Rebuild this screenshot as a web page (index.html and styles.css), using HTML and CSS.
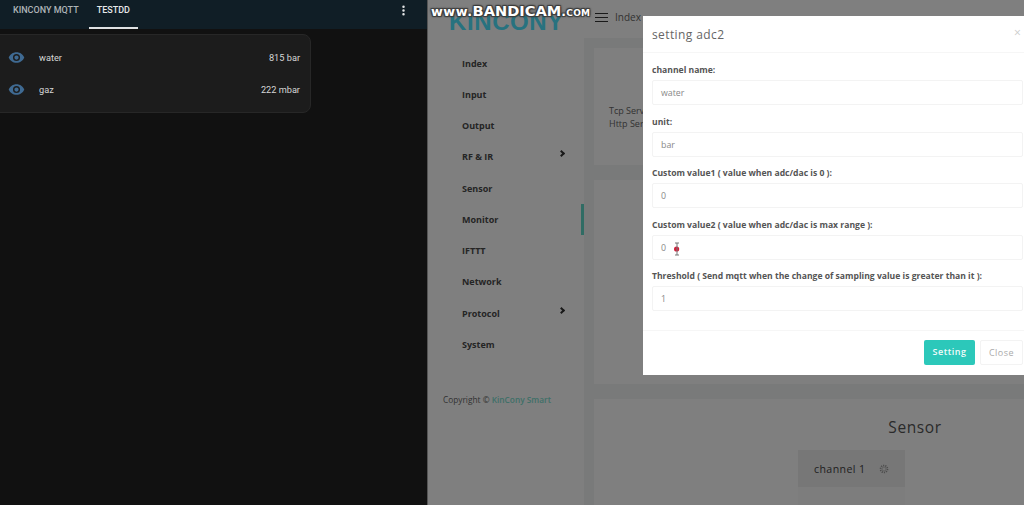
FILE: index.html
```html
<!DOCTYPE html>
<html lang="en">
<head>
  <meta charset="UTF-8" />
  <title>KinCony</title>
  <link rel="stylesheet" href="styles.css">
</head>
<body>

  <div class="ha-pane">
    <div class="ha-tabs">
      <div class="ha-tab">KINCONY MQTT</div>
      <div class="ha-tab active">TESTDD</div>
      <svg class="ha-menu" viewBox="0 0 24 24"><path d="M12,16A2,2 0 0,1 14,18A2,2 0 0,1 12,20A2,2 0 0,1 10,18A2,2 0 0,1 12,16M12,10A2,2 0 0,1 14,12A2,2 0 0,1 12,14A2,2 0 0,1 10,12A2,2 0 0,1 12,10M12,4A2,2 0 0,1 14,6A2,2 0 0,1 12,8A2,2 0 0,1 10,6A2,2 0 0,1 12,4Z"/></svg>
    </div>
    <div class="ha-card">
      <div class="ha-row">
        <svg class="ha-eye" viewBox="0 0 24 24"><path d="M12,9A3,3 0 0,0 9,12A3,3 0 0,0 12,15A3,3 0 0,0 15,12A3,3 0 0,0 12,9M12,17A5,5 0 0,1 7,12A5,5 0 0,1 12,7A5,5 0 0,1 17,12A5,5 0 0,1 12,17M12,4.5C7,4.5 2.73,7.61 1,12C2.73,16.39 7,19.5 12,19.5C17,19.5 21.27,16.39 23,12C21.27,7.61 17,4.5 12,4.5Z"/></svg>
        <span class="ha-name">water</span>
        <span class="ha-value">815 bar</span>
      </div>
      <div class="ha-row">
        <svg class="ha-eye" viewBox="0 0 24 24"><path d="M12,9A3,3 0 0,0 9,12A3,3 0 0,0 12,15A3,3 0 0,0 15,12A3,3 0 0,0 12,9M12,17A5,5 0 0,1 7,12A5,5 0 0,1 12,7A5,5 0 0,1 17,12A5,5 0 0,1 12,17M12,4.5C7,4.5 2.73,7.61 1,12C2.73,16.39 7,19.5 12,19.5C17,19.5 21.27,16.39 23,12C21.27,7.61 17,4.5 12,4.5Z"/></svg>
        <span class="ha-name">gaz</span>
        <span class="ha-value">222 mbar</span>
      </div>
    </div>
  </div>

  <div class="kc-pane">
    <div class="sidebar">
      <div class="logo">KINCONY</div>
      <div class="nav">
        <div class="nav-item">Index</div>
        <div class="nav-item">Input</div>
        <div class="nav-item">Output</div>
        <div class="nav-item">RF &amp; IR<span class="chevron"></span></div>
        <div class="nav-item">Sensor</div>
        <div class="nav-item current">Monitor</div>
        <div class="nav-item">IFTTT</div>
        <div class="nav-item">Network</div>
        <div class="nav-item">Protocol<span class="chevron"></span></div>
        <div class="nav-item">System</div>
      </div>
      <div class="copyright">Copyright © <span class="brand">KinCony Smart</span></div>
    </div>

    <div class="main">
      <div class="topbar">
        <div class="burger"><span></span><span></span><span></span></div>
        <span class="crumb">Index</span>
      </div>
      <div class="content">
        <div class="panel panel-info">
          <p>Tcp Serv</p>
          <p>Http Ser</p>
        </div>
        <div class="panel panel-mid"></div>
        <div class="panel panel-sensor">
          <h2>Sensor</h2>
          <div class="channel">
            <span>channel 1</span>
            <svg class="gear" viewBox="0 0 12 12"><circle cx="6" cy="6" r="4.2" class="gear-teeth"/><circle cx="6" cy="6" r="2.4" class="gear-ring"/></svg>
          </div>
          <div class="channel-next"></div>
        </div>
      </div>
    </div>

    <div class="overlay"></div>

    <div class="modal">
      <div class="modal-head">
        <span class="modal-title">setting adc2</span>
        <span class="modal-x">×</span>
      </div>
      <div class="modal-body">
        <div class="field">
          <div class="field-label">channel name:</div>
          <div class="field-input">water</div>
        </div>
        <div class="field">
          <div class="field-label">unit:</div>
          <div class="field-input">bar</div>
        </div>
        <div class="field">
          <div class="field-label">Custom value1 ( value when adc/dac is 0 ):</div>
          <div class="field-input">0</div>
        </div>
        <div class="field">
          <div class="field-label">Custom value2 ( value when adc/dac is max range ):</div>
          <div class="field-input">0</div>
        </div>
        <div class="field">
          <div class="field-label">Threshold ( Send mqtt when the change of sampling value is greater than it ):</div>
          <div class="field-input">1</div>
        </div>
      </div>
      <div class="modal-foot">
        <div class="btn btn-primary">Setting</div>
        <div class="btn btn-plain">Close</div>
      </div>
    </div>
  </div>

  <svg class="cursor" viewBox="0 0 10 14">
    <circle cx="4.6" cy="7" r="2.6" fill="#d0203c"/>
    <path d="M3 1h4M5 1v12M3 13h4" stroke="#777" stroke-width="1" fill="none"/>
  </svg>

  <div class="watermark"><small>www.</small>BANDICAM<small class="dot-com">.com</small></div>

</body>
</html>
```

FILE: styles.css
```css
* {
  margin: 0;
  padding: 0;
  box-sizing: border-box;
}
html, body {
  height: 505px;
  overflow: hidden;
}
body {
  display: flex;
  position: relative;
  font-family: "Open Sans", sans-serif;
  background: #111;
}

/* left pane */
.ha-pane {
  width: 428px;
  flex: none;
  background: #111;
  font-family: Roboto, sans-serif;
  border-right: 1px solid #555;
}
.ha-tabs {
  height: 29px;
  background: #101e26;
  display: flex;
  align-items: flex-start;
  position: relative;
  color: #aeb4b8;
  font-size: 9px;
  font-weight: 500;
}
.ha-tab {
  height: 29px;
  padding: 5px 8px 0;
  margin-left: 5px;
  line-height: 11px;
}
.ha-tab.active {
  color: #e6e8e9;
  margin-left: 2px;
  border-bottom: 2px solid #dfe2e3;
}
.ha-menu {
  position: absolute;
  right: 16px;
  top: 3px;
  width: 15px;
  height: 15px;
  fill: #e4e6e7;
}
.ha-card {
  width: 321px;
  height: 79px;
  margin: 5px 0 0 -10px;
  padding: 7px 10px 0 17px;
  background: #1c1c1c;
  border: 1px solid #272727;
  border-radius: 8px;
}
.ha-row {
  height: 31.5px;
  display: flex;
  align-items: center;
  font-size: 9.2px;
  color: #d6d6d6;
}
.ha-eye {
  width: 17px;
  height: 17px;
  fill: #3f6a92;
  flex: none;
}
.ha-name {
  margin-left: 14px;
  flex: 1;
}

/* right pane */
.kc-pane {
  flex: 1;
  display: flex;
  position: relative;
  overflow: hidden;
  background: #fff;
}
.sidebar {
  width: 156px;
  flex: none;
  display: flex;
  flex-direction: column;
}
.logo {
  height: 32px;
  padding: 10px 0 0 21px;
  font-family: "Liberation Sans", sans-serif;
  font-weight: 700;
  font-size: 24px;
  line-height: 24px;
  letter-spacing: 0.6px;
  color: #4ee4ff;
  white-space: nowrap;
}
.nav {
  margin-top: 15.5px;
}
.nav-item {
  position: relative;
  height: 31.25px;
  line-height: 31px;
  padding-left: 34px;
  font-size: 9px;
  font-weight: 700;
  color: #4a4a4a;
}
.chevron {
  position: absolute;
  left: 131px;
  top: 10px;
  width: 5px;
  height: 5px;
  border-top: 2px solid #333;
  border-right: 2px solid #333;
  transform: rotate(45deg);
}
.nav-item.current::after {
  content: "";
  position: absolute;
  right: 0;
  top: 0;
  width: 3px;
  height: 100%;
  background: #60d8c8;
}
.copyright {
  margin-top: 34px;
  padding-left: 15px;
  font-size: 8.3px;
  color: #666;
  white-space: nowrap;
}
.brand {
  color: #80e0d0;
  font-weight: 600;
}
.main {
  flex: 1;
  min-width: 0;
}
.topbar {
  height: 38px;
  display: flex;
  align-items: center;
  padding: 0 0 4px 11px;
  font-size: 10.5px;
  color: #666;
}
.burger {
  width: 13px;
  margin-right: 7px;
  display: flex;
  flex-direction: column;
  gap: 3px;
}
.burger span {
  height: 1px;
  background: #333;
}
.crumb {
  font-size: 10px;
}
.content {
  background: #f2f4f5;
  padding: 10px 0 0 10px;
  display: flex;
  flex-direction: column;
  gap: 15px;
  height: 467px;
}
.panel {
  background: #fff;
  flex: none;
}
.panel-info {
  height: 117px;
  padding: 56px 0 0 15px;
  font-size: 9px;
  line-height: 13px;
  color: #666;
  white-space: nowrap;
}
.panel-mid {
  height: 204px;
}
.panel-sensor {
  height: 110px;
  display: flex;
  flex-direction: column;
  align-items: center;
  padding: 17px 0 0 85px;
}
.panel-sensor h2 {
  font-size: 15.5px;
  font-weight: 400;
  line-height: 22px;
  letter-spacing: 0.6px;
  color: #555;
  margin-left: 127px;
}
.channel {
  width: 107px;
  height: 37px;
  margin-top: 12px;
  padding-left: 16px;
  display: flex;
  align-items: center;
  gap: 14px;
  background: #eeeeee;
  font-size: 10.6px;
  letter-spacing: 0.4px;
  color: #444;
  flex: none;
}
.gear {
  width: 10px;
  height: 10px;
  fill: none;
  flex: none;
}
.gear-teeth {
  stroke: #999;
  stroke-width: 2;
  stroke-dasharray: 1.4 1.2;
}
.gear-ring {
  stroke: #aaa;
  stroke-width: 0.8;
}
.channel-next {
  width: 107px;
  height: 20px;
  background: #fafafa;
  flex: none;
}
.overlay {
  position: absolute;
  inset: 0;
  background: rgba(0, 0, 0, 0.5);
}

/* modal */
.modal {
  position: absolute;
  left: 215px;
  top: 16px;
  width: 400px;
  height: 359px;
  background: #fff;
  color: #555;
}
.modal-head {
  height: 37px;
  padding: 0 20px 0 9px;
  display: flex;
  align-items: center;
  position: relative;
  border-bottom: 1px solid #f6f6f6;
}
.modal-title {
  font-size: 12px;
  letter-spacing: 0.4px;
  color: #666;
}
.modal-x {
  position: absolute;
  left: 371px;
  top: 10px;
  font-size: 12px;
  line-height: 14px;
  color: #ccc;
}
.modal-body {
  height: 278px;
  padding: 9px 0 0 9px;
  border-bottom: 1px solid #f6f6f6;
}
.field {
  width: 371px;
  height: 51.5px;
}
.field-label {
  height: 16px;
  line-height: 16px;
  margin-bottom: 2px;
  font-size: 8.6px;
  font-weight: 700;
  color: #555;
  white-space: nowrap;
}
.field-input {
  height: 25px;
  line-height: 24px;
  padding-left: 8px;
  border: 1px solid #f3f3f3;
  border-radius: 2px;
  font-size: 8.8px;
  color: #888;
}
.modal-foot {
  width: 380px;
  padding-top: 9px;
  display: flex;
  justify-content: flex-end;
  gap: 5px;
}
.btn {
  height: 25px;
  line-height: 24px;
  text-align: center;
  font-size: 9px;
  letter-spacing: 0.5px;
  border-radius: 2px;
}
.btn-primary {
  width: 51px;
  background: #2cc8ba;
  color: #f2fbfa;
  font-weight: 600;
}
.btn-plain {
  width: 43px;
  border: 1px solid #f3f3f3;
  color: #aaa;
}

/* screen recorder leftovers */
.cursor {
  position: absolute;
  left: 672px;
  top: 242px;
  width: 10px;
  height: 14px;
}
.watermark {
  position: absolute;
  left: 431px;
  top: 3px;
  font-family: "DejaVu Sans", sans-serif;
  font-weight: 700;
  font-size: 14.6px;
  line-height: 16px;
  color: #fff;
  white-space: nowrap;
  text-shadow: -1px -1px 1px #3a3a3a, 1px -1px 1px #3a3a3a, -1px 1px 1px #3a3a3a, 1px 1px 1px #3a3a3a, 0 0 3px #3a3a3a;
}
.watermark small {
  font-size: 12.8px;
  letter-spacing: 0.5px;
}
.watermark .dot-com {
  font-variant: small-caps;
  font-size: 12.4px;
  letter-spacing: 0.3px;
}
```
